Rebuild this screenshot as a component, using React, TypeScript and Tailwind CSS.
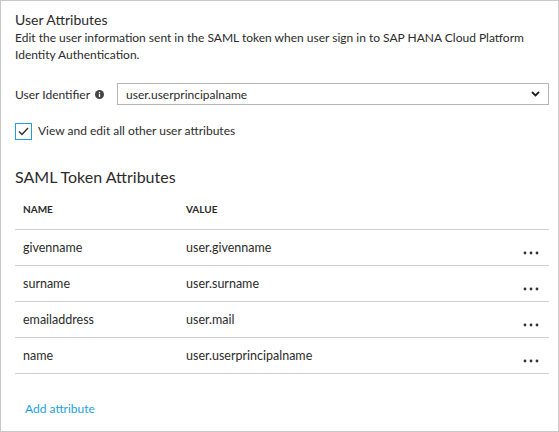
import React from 'react';

const rows = [
  { name: 'givenname', value: 'user.givenname' },
  { name: 'surname', value: 'user.surname' },
  { name: 'emailaddress', value: 'user.mail' },
  { name: 'name', value: 'user.userprincipalname' },
];

const Dots: React.FC = () => (
  <svg width="16" height="4" viewBox="0 0 16 4" className="mt-[10px]">
    <circle cx="2" cy="2" r="1.4" fill="#333" />
    <circle cx="8" cy="2" r="1.4" fill="#333" />
    <circle cx="14" cy="2" r="1.4" fill="#333" />
  </svg>
);

export default function App() {
  return (
    <div
      className="w-[559px] h-[432px] border border-[#c8c8c8] bg-white pl-[14px] pr-[9px] pt-[9px] text-[#2b2b2b] text-[12px] leading-[17px]"
      style={{ fontFamily: '"Segoe UI", Lato, sans-serif' }}
    >
      <h2 className="text-[14px] leading-[19px]">User Attributes</h2>
      <p className="leading-[17px]">
        Edit the user information sent in the SAML token when user sign in to SAP HANA Cloud Platform
        <br />
        Identity Authentication.
      </p>

      <div className="mt-[20px] flex items-center">
        <div className="w-[102px] flex items-center gap-[5px]">
          <span>User Identifier</span>
          <svg width="9" height="9" viewBox="0 0 10 10">
            <circle cx="5" cy="5" r="5" fill="#444" />
            <rect x="4.3" y="4.2" width="1.4" height="3.6" fill="#fff" />
            <circle cx="5" cy="2.7" r="0.8" fill="#fff" />
          </svg>
        </div>
        <div className="flex-1 h-[22px] border border-[#b5b5b5] flex items-center justify-between pl-[8px] pr-[8px]">
          <span>user.userprincipalname</span>
          <svg width="9" height="6" viewBox="0 0 9 6">
            <polyline points="1,1 4.5,4.5 8,1" fill="none" stroke="#222" strokeWidth="1.8" />
          </svg>
        </div>
      </div>

      <label className="mt-[18px] flex items-center gap-[6px]">
        <span className="w-[17px] h-[17px] border border-[#1e9fdc] flex items-center justify-center">
          <svg width="11" height="9" viewBox="0 0 11 9">
            <polyline points="1,4.5 4,7.5 10,1" fill="none" stroke="#333" strokeWidth="1.5" />
          </svg>
        </span>
        <span className="-mt-[2px]">View and edit all other user attributes</span>
      </label>

      <h2 className="mt-[26px] text-[16px] leading-[22px]">SAML Token Attributes</h2>

      <div className="mt-[1px] text-[12.5px]">
        <div className="h-[41px] flex items-center border-b border-[#cfcfcf] text-[10px] font-bold">
          <div className="w-[171px] pl-[8px]">NAME</div>
          <div>VALUE</div>
        </div>
        {rows.map((r) => (
          <div key={r.name} className="h-[36px] flex items-center border-b border-[#cfcfcf]">
            <div className="w-[171px] pl-[8px]">{r.name}</div>
            <div className="flex-1">{r.value}</div>
            <div className="w-[26px] flex">
              <Dots />
            </div>
          </div>
        ))}
      </div>

      <div className="mt-[26px] pl-[10px] leading-[18px] text-[#1ba1e2]">Add attribute</div>
    </div>
  );
}
